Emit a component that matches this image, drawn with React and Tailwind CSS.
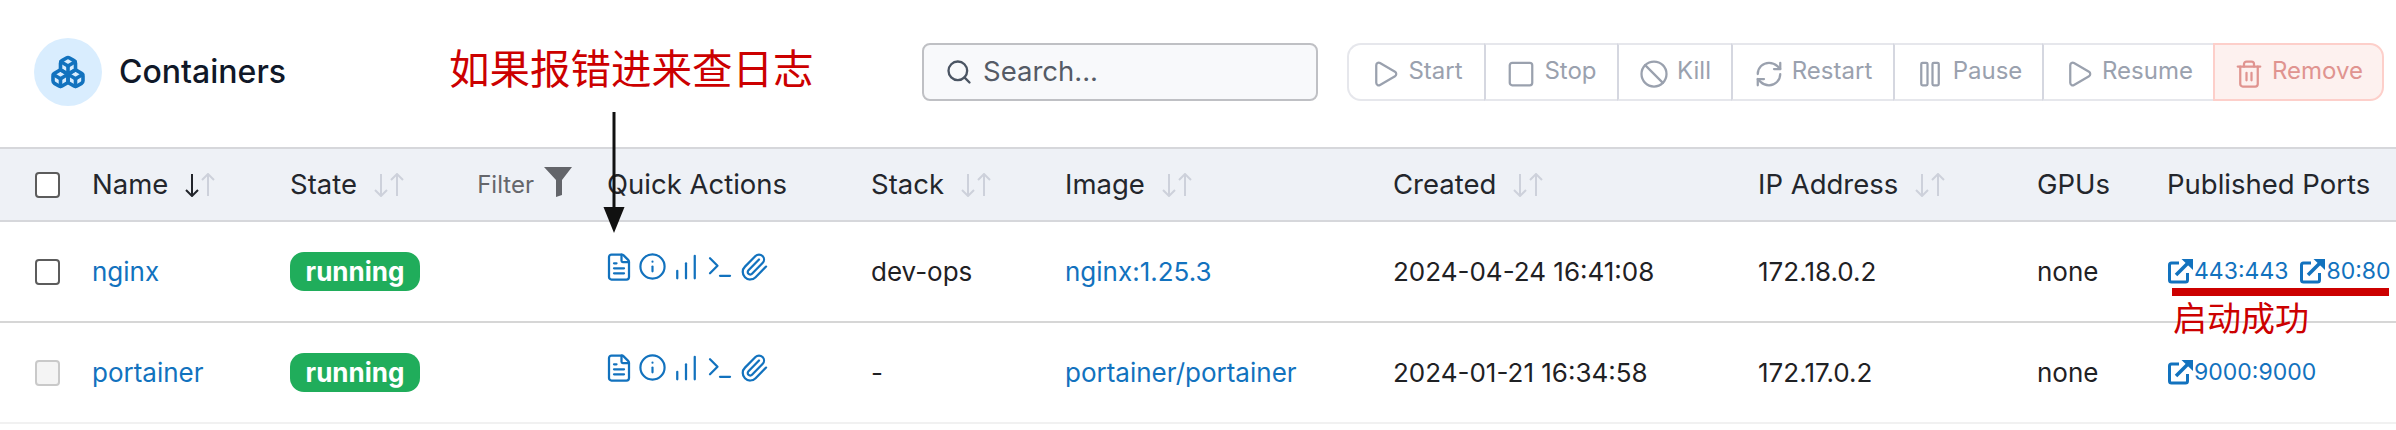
import React from "react";
import { Search, Play, Square, Ban, RefreshCw, Pause, Trash2, FileText, Info, BarChart, Terminal, Paperclip, Boxes } from "lucide-react";

const COLS = "grid grid-cols-[92px_198px_317px_264px_194px_328px_365px_279px_130px_229px]";

const actions = [
  { label: "Start", Icon: Play, w: "w-[137px]", first: true },
  { label: "Stop", Icon: Square, w: "w-[133px]" },
  { label: "Kill", Icon: Ban, w: "w-[114px]" },
  { label: "Restart", Icon: RefreshCw, w: "w-[162px]" },
  { label: "Pause", Icon: Pause, w: "w-[149px]" },
  { label: "Resume", Icon: Play, w: "w-[171px]" },
];

function Sort({ active }) {
  return (
    <span className="ml-[17px] inline-flex items-center gap-[2px]">
      <svg viewBox="0 0 14 24" className={`h-[24px] w-[14px] ${active ? "text-[#22252b]" : "text-[#cdd1db]"}`} fill="none" stroke="currentColor" strokeWidth="2">
        <path d="M7 1V23M1 17L7 23L13 17" />
      </svg>
      <svg viewBox="0 0 14 24" className="h-[24px] w-[14px] text-[#cdd1db]" fill="none" stroke="currentColor" strokeWidth="2">
        <path d="M7 23V1M1 7L7 1L13 7" />
      </svg>
    </span>
  );
}

function Check({ disabled }) {
  return (
    <div className="flex h-full items-center pl-[35px]">
      <span className={disabled ? "h-[26px] w-[25px] rounded-[4px] border-2 border-[#c9c9c9] bg-[#f4f4f4]" : "h-[26px] w-[25px] rounded-[4px] border-2 border-[#5c5c5c] bg-white"} />
    </div>
  );
}

function Head({ children, sort, active }) {
  return (
    <div className="flex h-full items-center text-[27.500px] text-[#23262c]">
      {children}
      {sort && <Sort active={active} />}
    </div>
  );
}

function PortIcon() {
  return (
    <svg viewBox="0 0 26 26" className="h-[26px] w-[26px] shrink-0 text-[#1272be]" fill="none">
      <path d="M12 5H4.500A2 2 0 0 0 2.500 7v15a2 2 0 0 0 2 2h14a2 2 0 0 0 2-2v-7" stroke="currentColor" strokeWidth="3" />
      <path d="M9 17L21 5" stroke="currentColor" strokeWidth="3.500" />
      <path d="M14.500 1H26V12Z" fill="currentColor" />
    </svg>
  );
}

function Port({ children }) {
  return (
    <span className="inline-flex items-center gap-[1px] text-[23px] leading-[26px] text-[#1272be]">
      <PortIcon />
      {children}
    </span>
  );
}

function QuickActions() {
  return (
    <div className="-ml-[3px] flex h-full items-center gap-[4px] pb-[10px] text-[#1272be]">
      <FileText size={30} strokeWidth={1.8} className="shrink-0" />
      <Info size={29} strokeWidth={1.8} className="shrink-0" />
      <BarChart size={30} strokeWidth={1.8} className="shrink-0" />
      <Terminal size={30} strokeWidth={1.8} className="shrink-0" />
      <Paperclip size={30} strokeWidth={1.8} className="shrink-0" />
    </div>
  );
}

function Badge() {
  return (
    <span className="flex h-[39px] w-[130px] items-center justify-center rounded-[14px] bg-[#20ad5b] text-[26px] font-bold text-white">
      running
    </span>
  );
}

function Row({ name, stack, image, created, ip, ports, disabled, last }) {
  return (
    <div className={`${COLS} h-[101px] border-b-2 ${last ? "border-[#f1f1f1]" : "border-[#d6d6d6]"} text-[26px] text-[#1f2124]`}>
      <Check disabled={disabled} />
      <div className="flex items-center text-[#1272be]">{name}</div>
      <div className="flex items-center"><Badge /></div>
      <QuickActions />
      <div className="flex items-center">{stack}</div>
      <div className="flex items-center text-[#1272be]">{image}</div>
      <div className="flex items-center">{created}</div>
      <div className="flex items-center">{ip}</div>
      <div className="flex items-center">none</div>
      <div className="flex items-center gap-[11px] pb-[2px]">
        {ports.map((p) => <Port key={p}>{p}</Port>)}
      </div>
    </div>
  );
}

const marks = [];
for (let r = 0; r < 2; r++) {
  for (let c = 0; c < 6; c++) {
    marks.push({ left: -89 + c * 434, top: 175 + r * 253 });
  }
}

export default function App() {
  return (
    <div className="relative h-[430px] w-[2396px] overflow-hidden bg-white font-['Inter','Noto_Sans_CJK_SC',sans-serif]">
      <div className="flex items-center pb-[41px] pl-[34px] pr-[12px] pt-[38px]">
        <div className="flex h-[68px] w-[68px] items-center justify-center rounded-full bg-[#d9edfe]">
          <Boxes size={36} strokeWidth={2.4} className="text-[#1272be]" />
        </div>
        <h1 className="ml-[17px] text-[32px] font-medium text-[#101828]">Containers</h1>
        <div className="ml-auto flex h-[58px] w-[396px] items-center gap-[10px] rounded-[8px] border-2 border-[#bfc0c4] bg-[#f8f9fb] pl-[21px] text-[27.500px] text-[#555b66]">
          <Search size={28} strokeWidth={2} className="text-[#4b5563]" />
          Search...
        </div>
        <div className="ml-[29px] flex h-[58px]">
          {actions.map(({ label, Icon, w, first }) => (
            <div
              key={label}
              className={`flex items-center justify-center gap-[8px] border-y-2 border-[#e6e7ec] text-[24px] text-[#9aa1ae] ${w} ${first ? "rounded-l-[14px] border-l-2" : "border-l-2 border-l-[#d5d7e0]"}`}
            >
              <Icon size={30} strokeWidth={1.8} className="mt-[4px] text-[#9aa1ae]" />
              <span className="-mt-[2px]">{label}</span>
            </div>
          ))}
          <div className="flex w-[171px] items-center justify-center gap-[8px] rounded-r-[14px] border-2 border-[#fdcfca] bg-[#fdf1ef] text-[24px] text-[#e09490]">
            <Trash2 size={30} strokeWidth={1.8} className="mt-[4px]" />
            <span className="-mt-[2px]">Remove</span>
          </div>
        </div>
      </div>

      <div className={`${COLS} h-[75px] border-y-2 border-[#d6d7db] bg-[#eef1f6]`}>
        <Check />
        <Head sort active>Name</Head>
        <div className="flex h-full items-center justify-between pr-[35px]">
          <Head sort>State</Head>
          <span className="flex items-center gap-[10px] text-[24px] text-[#64666b]">
            Filter
            <svg viewBox="0 0 28 30" className="-mt-[6px] h-[30px] w-[28px]" fill="#63656a">
              <path d="M0 0H28L18 13V28L12 30V13Z" />
            </svg>
          </span>
        </div>
        <Head>Quick Actions</Head>
        <Head sort>Stack</Head>
        <Head sort>Image</Head>
        <Head sort>Created</Head>
        <Head sort>IP Address</Head>
        <Head>GPUs</Head>
        <Head>Published Ports</Head>
      </div>

      <Row name="nginx" stack="dev-ops" image="nginx:1.25.3" created="2024-04-24 16:41:08" ip="172.18.0.2" ports={["443:443", "80:80"]} />
      <Row name="portainer" stack="-" image="portainer/portainer" created="2024-01-21 16:34:58" ip="172.17.0.2" ports={["9000:9000"]} disabled last />

      {/* watermark */}
      <div className="pointer-events-none absolute inset-0 overflow-hidden">
        {marks.map((m) => (
          <span
            key={`${m.left}-${m.top}`}
            className="absolute origin-bottom-left -rotate-[22deg] whitespace-nowrap text-[28px] leading-[28px] text-black/[0.02]"
            style={{ left: m.left, top: m.top }}
          >
            fuzhengwei3-713948
          </span>
        ))}
      </div>

      {/* annotations */}
      <div className="absolute left-[449px] top-[47px] text-[40.500px] leading-[46px] text-[#cc0000]">如果报错进来查日志</div>
      <svg className="absolute left-[601px] top-[112px]" width="26" height="122" viewBox="0 0 26 122">
        <path d="M13 0V100" stroke="#111" strokeWidth="3" />
        <path d="M2.500 95H23.500L13 121Z" fill="#111" />
      </svg>
      <div className="absolute left-[2172px] top-[288px] h-[8px] w-[217px] bg-[#cc0000]" />
      <div className="absolute left-[2173px] top-[299px] text-[34px] leading-[40px] text-[#cc0000]">启动成功</div>
    </div>
  );
}
